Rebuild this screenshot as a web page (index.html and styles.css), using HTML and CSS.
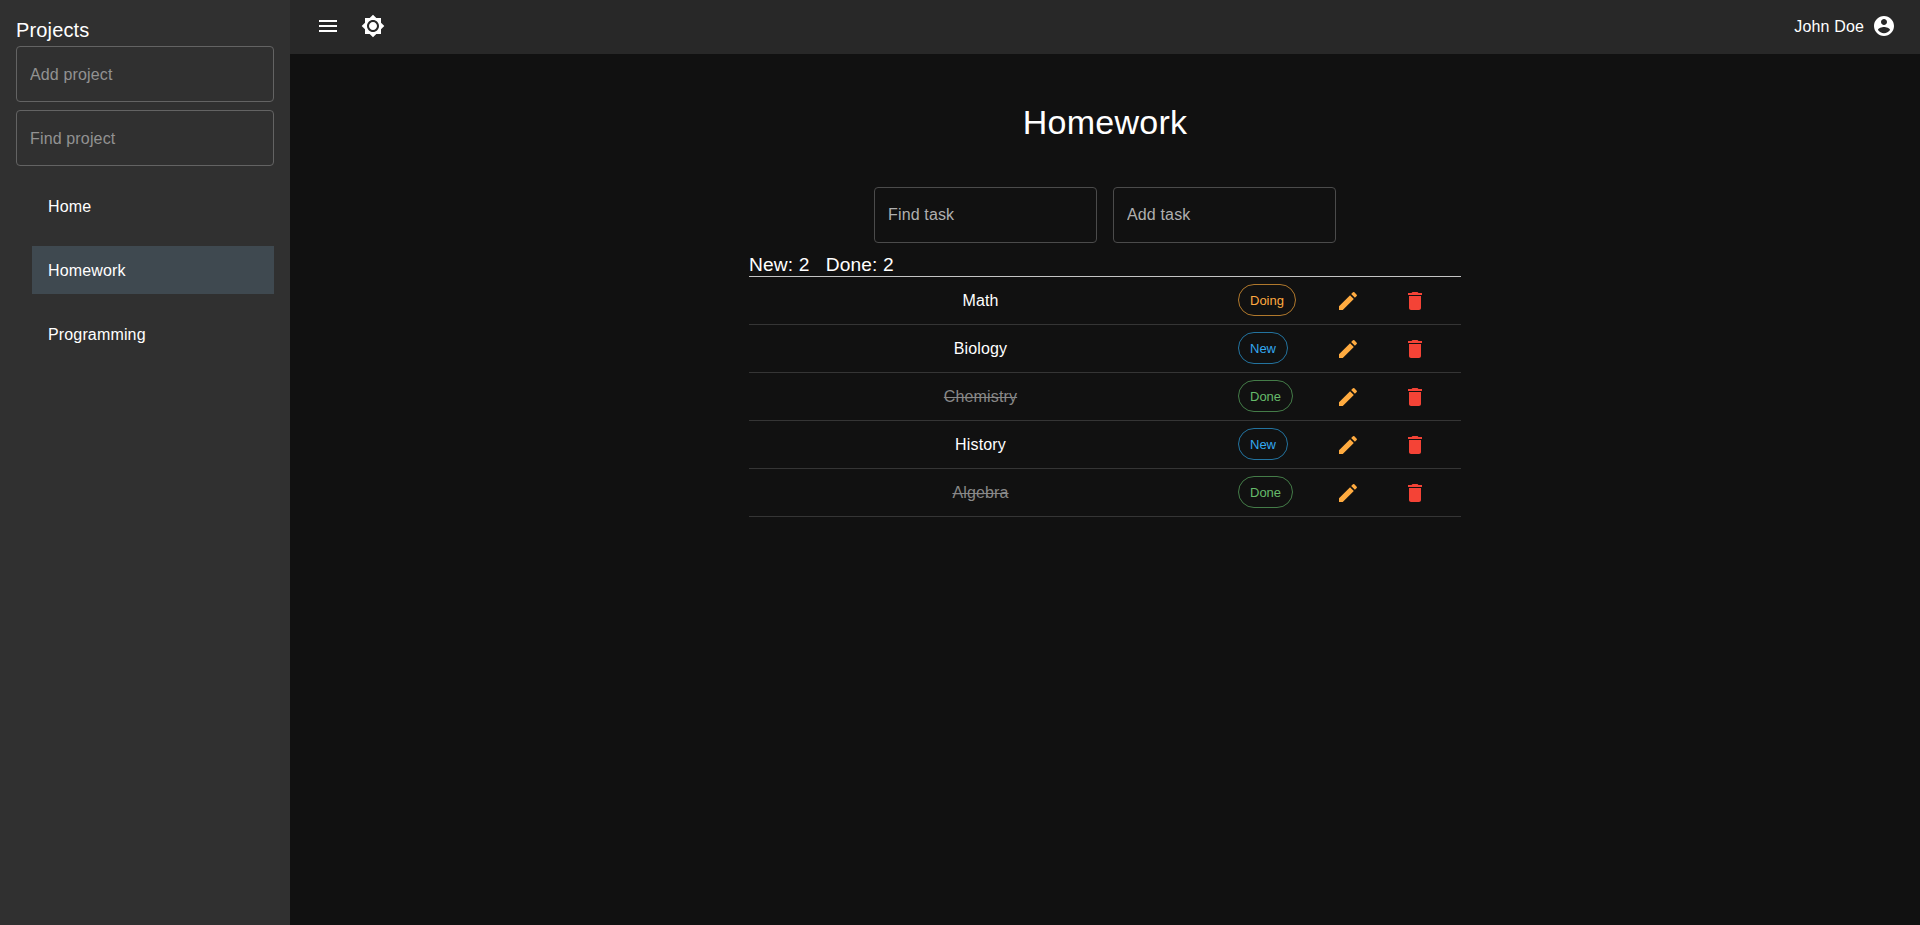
FILE: index.html
```html
<!DOCTYPE html>
<html lang="en">
<head>
<meta charset="utf-8">
<title>Homework</title>
<link rel="stylesheet" href="styles.css">
</head>
<body>
<svg class="defs" width="0" height="0">
  <symbol id="edit" viewBox="0 0 24 24"><path d="M3 17.25V21h3.75L17.81 9.94l-3.75-3.75L3 17.25zM20.71 7.04c.39-.39.39-1.02 0-1.41l-2.34-2.34a.9959.9959 0 0 0-1.41 0l-1.83 1.83 3.75 3.75 1.83-1.83z"/></symbol>
  <symbol id="delete" viewBox="0 0 24 24"><path d="M6 19c0 1.100.9 2 2 2h8c1.100 0 2-.9 2-2V7H6v12zM19 4h-3.500l-1-1h-5l-1 1H5v2h14V4z"/></symbol>
</svg>
<div class="app">
  <aside class="sidebar">
    <h2 class="sidebar-title">Projects</h2>
    <input class="field" placeholder="Add project">
    <input class="field" placeholder="Find project">
    <nav class="projects">
      <a class="project">Home</a>
      <a class="project selected">Homework</a>
      <a class="project">Programming</a>
    </nav>
  </aside>
  <div class="content">
    <header class="topbar">
      <svg class="icon" viewBox="0 0 24 24"><path d="M3 18h18v-2H3v2zm0-5h18v-2H3v2zm0-7v2h18V6H3z"/></svg>
      <svg class="icon" viewBox="0 0 24 24"><path d="M20 8.690V4h-4.690L12 .69 8.690 4H4v4.690L.69 12 4 15.310V20h4.690L12 23.310 15.310 20H20v-4.690L23.310 12 20 8.690zM12 18c-3.310 0-6-2.690-6-6s2.690-6 6-6 6 2.690 6 6-2.690 6-6 6zm0-10c-2.210 0-4 1.790-4 4s1.790 4 4 4 4-1.790 4-4-1.790-4-4-4z"/></svg>
      <div class="user">
        <span class="user-name">John Doe</span>
        <svg class="icon" viewBox="0 0 24 24"><path d="M12 2C6.480 2 2 6.480 2 12s4.480 10 10 10 10-4.480 10-10S17.520 2 12 2zm0 3c1.660 0 3 1.340 3 3s-1.340 3-3 3-3-1.340-3-3 1.340-3 3-3zm0 14.200c-2.500 0-4.710-1.280-6-3.220.030-1.990 4-3.080 6-3.080 1.990 0 5.970 1.090 6 3.080-1.290 1.940-3.500 3.220-6 3.220z"/></svg>
      </div>
    </header>
    <main class="main">
      <h1 class="title">Homework</h1>
      <div class="task-fields">
        <input class="field task-field" placeholder="Find task">
        <input class="field task-field" placeholder="Add task">
      </div>
      <section class="tasks">
        <div class="summary"><span>New: 2</span><span>Done: 2</span></div>
        <div class="task"><span class="name">Math</span><span class="status"><span class="chip doing">Doing</span></span><svg class="icon edit"><use href="#edit"/></svg><svg class="icon delete"><use href="#delete"/></svg></div>
        <div class="task"><span class="name">Biology</span><span class="status"><span class="chip new">New</span></span><svg class="icon edit"><use href="#edit"/></svg><svg class="icon delete"><use href="#delete"/></svg></div>
        <div class="task"><span class="name finished">Chemistry</span><span class="status"><span class="chip done">Done</span></span><svg class="icon edit"><use href="#edit"/></svg><svg class="icon delete"><use href="#delete"/></svg></div>
        <div class="task"><span class="name">History</span><span class="status"><span class="chip new">New</span></span><svg class="icon edit"><use href="#edit"/></svg><svg class="icon delete"><use href="#delete"/></svg></div>
        <div class="task"><span class="name finished">Algebra</span><span class="status"><span class="chip done">Done</span></span><svg class="icon edit"><use href="#edit"/></svg><svg class="icon delete"><use href="#delete"/></svg></div>
      </section>
    </main>
  </div>
</div>
</body>
</html>
```
FILE: styles.css
```css
* { box-sizing: border-box; }
body {
  margin: 0;
  background: #111;
  color: #fff;
  font: 16px/24px "Liberation Sans", Arial, sans-serif;
  letter-spacing: 0.15px;
}
h1, h2 { margin: 0; font-weight: 400; }
.defs { display: block; position: absolute; }
.app { display: flex; height: 100vh; overflow: hidden; }
.sidebar {
  width: 290px;
  flex: none;
  padding: 14px 16px;
  background: #303030;
}
.sidebar-title { font-size: 20px; line-height: 32px; }
.field {
  display: block;
  width: 100%;
  height: 56px;
  margin: 0 0 8px;
  padding: 2px 13px 0;
  border: 1px solid #636363;
  border-radius: 4px;
  outline: 0;
  background: transparent;
  color: #fff;
  font: inherit;
  letter-spacing: inherit;
}
.field::placeholder { color: #929292; opacity: 1; }
.projects {
  display: flex;
  flex-direction: column;
  gap: 16px;
  padding: 8px 0 0 16px;
}
.project { height: 48px; padding-left: 16px; line-height: 49px; }
.selected { background: #3f4950; }
.content { flex: 1; }
.topbar {
  display: flex;
  align-items: center;
  gap: 21px;
  height: 54px;
  padding: 0 24px 2px 26px;
  background: #282828;
}
.icon { display: block; width: 24px; height: 24px; fill: #fff; }
.user { display: flex; align-items: center; gap: 8px; margin-left: auto; }
.user-name { padding-top: 2px; }
.main { width: 712px; margin: 0 auto; }
.title {
  padding-top: 47px;
  font-size: 34px;
  line-height: 42px;
  letter-spacing: 0.25px;
  text-align: center;
}
.task-fields { display: flex; justify-content: center; gap: 16px; padding-top: 44px; }
.task-field { width: 223px; padding-top: 0; border-color: #4b4b4b; }
.task-field::placeholder { color: #afafaf; }
.summary {
  display: flex;
  gap: 16px;
  height: 26px;
  border-bottom: 1px solid #c4c4c4;
  font-size: 19.2px;
  line-height: 28px;
}
.task {
  display: grid;
  grid-template-columns: 463px 124px 67px 24px;
  align-items: center;
  height: 48px;
  padding-bottom: 1px;
  border-bottom: 1px solid #353535;
}
.name { padding-top: 1px; text-align: center; }
.finished { color: #888; text-decoration: line-through; }
.status { padding: 0 0 1px 26px; }
.chip {
  display: block;
  width: max-content;
  height: 32px;
  padding: 0 11px;
  border: 1px solid;
  border-radius: 16px;
  font-size: 13px;
  line-height: 31px;
  letter-spacing: 0;
}
.doing { color: #ffa940; border-color: #b0782c; }
.new { color: #33a8f0; border-color: #23739f; }
.done { color: #66bb6a; border-color: #447c48; }
.task .icon { margin-top: 1px; }
.edit { fill: #ffab40; }
.delete { fill: #f44336; }
```
